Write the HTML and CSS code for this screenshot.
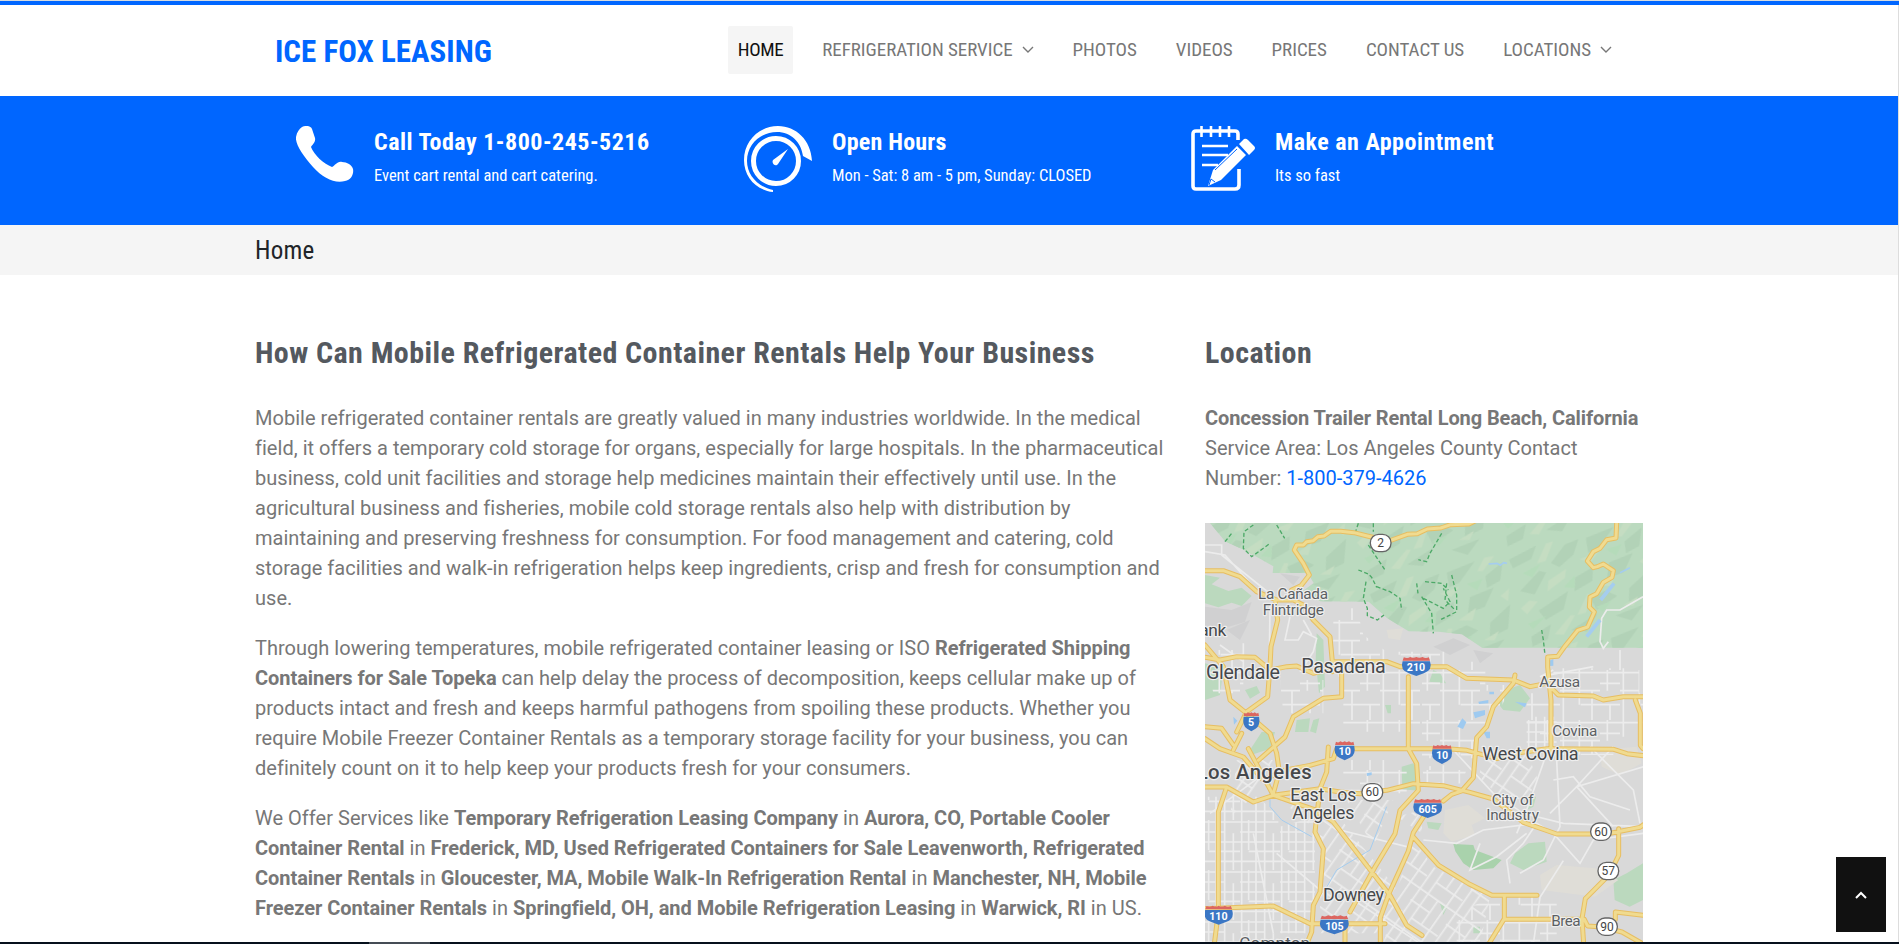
FILE: index.html
```html
<!DOCTYPE html>
<html lang="en">
<head>
<meta charset="utf-8">
<title>Ice Fox Leasing</title>
<link rel="stylesheet" href="styles.css">
</head>
<body>
<header class="header">
  <div class="header-inner">
    <a class="logo">ICE FOX LEASING</a>
    <nav class="nav">
      <a class="nav-link active">HOME</a>
      <a class="nav-link">REFRIGERATION SERVICE<svg class="caret" viewBox="0 0 12 8"><path d="M1 1l5 5 5-5"/></svg></a>
      <a class="nav-link">PHOTOS</a>
      <a class="nav-link">VIDEOS</a>
      <a class="nav-link">PRICES</a>
      <a class="nav-link">CONTACT US</a>
      <a class="nav-link">LOCATIONS<svg class="caret" viewBox="0 0 12 8"><path d="M1 1l5 5 5-5"/></svg></a>
    </nav>
  </div>
</header>
<section class="banner">
  <div class="feature feature-call">
    <svg class="feature-icon" width="58" height="66" viewBox="0 0 58 66"><path fill="#fff" d="M6 1C10-1 15 0 16 3l3 9c1 4-3 7-4 9 3 8 13 17 21 20 3-1 5-6 10-5 5 0 10 3 11 7 1 5-2 11-8 12-10 3-22-3-32-14C7 30-1 18 0 11 1 6 3 3 6 1z"/></svg>
    <div class="feature-text"><h3>Call Today 1-800-245-5216</h3><p>Event cart rental and cart catering.</p></div>
  </div>
  <div class="feature feature-hours">
    <svg class="feature-icon" width="68" height="67" viewBox="0 0 68 67"><g fill="none" stroke="#fff"><circle cx="32" cy="35" r="22.5" stroke-width="5"/></g><path fill="#fff" d="M29 66C12 64 0 51 0 34 0 15 15 0 34 0c18 0 33 14 34 35l-9-5C57 16 47 6 33 6 17 6 3 18 3 35c0 14 11 26 26 29zM44 23L34 38c-2 3-7 0-5-4z"/></svg>
    <div class="feature-text"><h3>Open Hours</h3><p>Mon - Sat: 8 am - 5 pm, Sunday: CLOSED</p></div>
  </div>
  <div class="feature feature-book">
    <svg class="feature-icon" width="64" height="66" viewBox="0 0 64 66"><g fill="none" stroke="#fff" stroke-width="3.6"><path d="M47 14V8q0-3-3-3H5Q2 5 2 8v52q0 3 3 3h39q4 0 4-4V43"/><path stroke-width="2.6" d="M10.500 0v11M20 0v11M29 0v11M38 0v11M11 20h26M11 29h26M11 39h16"/></g><path fill="#fff" d="M17 60l5-16L46 20l9 9-25 25zM48 18l5-5q2-1 4 1l6 6q2 2 0 4l-5 5z"/><path d="M24 44L46 23M18 59l2-6 4 3" stroke="#06f" fill="none"/></svg>
    <div class="feature-text"><h3>Make an Appointment</h3><p>Its so fast</p></div>
  </div>
</section>
<div class="crumbs"><span>Home</span></div>
<main class="main">
  <article class="article">
    <h2>How Can Mobile Refrigerated Container Rentals Help Your Business</h2>
    <p>Mobile refrigerated container rentals are greatly valued in many industries worldwide. In the medical<br>field, it offers a temporary cold storage for organs, especially for large hospitals. In the pharmaceutical<br>business, cold unit facilities and storage help medicines maintain their effectively until use. In the<br>agricultural business and fisheries, mobile cold storage rentals also help with distribution by<br>maintaining and preserving freshness for consumption. For food management and catering, cold<br>storage facilities and walk-in refrigeration helps keep ingredients, crisp and fresh for consumption and<br>use.</p>
    <p>Through lowering temperatures, mobile refrigerated container leasing or ISO <b>Refrigerated Shipping<br>Containers for Sale Topeka</b> can help delay the process of decomposition, keeps cellular make up of<br>products intact and fresh and keeps harmful pathogens from spoiling these products. Whether you<br>require Mobile Freezer Container Rentals as a temporary storage facility for your business, you can<br>definitely count on it to help keep your products fresh for your consumers.</p>
    <p>We Offer Services like <b>Temporary Refrigeration Leasing Company</b> in <b>Aurora, CO, Portable Cooler<br>Container Rental</b> in <b>Frederick, MD, Used Refrigerated Containers for Sale Leavenworth, Refrigerated<br>Container Rentals</b> in <b>Gloucester, MA, Mobile Walk-In Refrigeration Rental</b> in <b>Manchester, NH, Mobile<br>Freezer Container Rentals</b> in <b>Springfield, OH, and Mobile Refrigeration Leasing</b> in <b>Warwick, RI</b> in US.</p>
  </article>
  <aside class="aside">
    <h2>Location</h2>
    <p><b>Concession Trailer Rental Long Beach, California</b><br>Service Area: Los Angeles County Contact<br>Number: <a class="tel">1-800-379-4626</a></p>
    <svg class="map" width="438" height="421" viewBox="15 9 1314 1263">
      <defs>
        <pattern id="grid" width="180" height="150" patternUnits="userSpaceOnUse"><path class="street" d="M0 8H180M0 62H120M62 104H180M10 0V150M58 0V104M96 62V150M142 0V62M150 104V150M120 40H180"/></pattern>
        <pattern id="dense" width="120" height="150" patternUnits="userSpaceOnUse"><path class="street" d="M0 6H120M5 0V150M26 0V90M48 0V150M74 0V150M100 40V150M0 36H74M0 66H120M26 94H120M0 124H120"/></pattern>
        <pattern id="diag" width="130" height="130" patternUnits="userSpaceOnUse" patternTransform="rotate(35)"><path class="street" d="M0 6H130M5 0V130M34 0V130M70 6V94M100 0V130M0 50H70M34 94H130"/></pattern>
        <pattern id="relief" width="430" height="310" patternUnits="userSpaceOnUse" patternTransform="rotate(-14)">
          <g fill="#b2d2b7"><path d="M10 30l90-22-24 36-60 14zM130 70l54-44 44-6-26 42-50 26zM250 22l90-12-60 50-34 8zM360 60l60-28-20 52-44 12zM20 130l70-46 20 10-50 56zM190 130l60-18-12 40-60 18zM300 110l76-10-40 50-54 6zM60 200l100-36-26 50-60 18zM220 200l50-10 30 24-70 26zM340 200l72-40-24 70-60 14zM20 270l66-22-20 42-50 10zM140 280l90-30-44 46zM280 270l90-12-46 38z"/></g>
          <g fill="#c5ddc2"><path d="M90 60l40-50 22-2-36 52zM216 80l60-8-30 24zM340 40l30-34 30 2-44 36zM110 120l60-22-10 26-60 26zM250 170l60-24-20 34zM10 180l30-16 24 8-40 30zM170 240l44-54 12 4-30 50zM390 130l30-16-12 36zM90 280l60-44 12 4-46 48zM310 246l50-16-20 24z"/></g>
          <g fill="#b5dbba"><path d="M40 80l60-16-34 34zM150 150l40-26-8 36zM300 70l50-4-24 30zM230 230l50-6-34 26zM20 230l60-10-50 30z"/></g>
        </pattern>
        <path id="hills" d="M30 9l45 55 65 30 80 45-2 20h105l18 30-40 30 60 25 145 1 55 49 45 28 20 12 90 1 70 8 60 40h484V9z"/>
        <path id="ways" d="M275 210l28-13 25-32-18-35-27-40 7-15 20 0 10-10 20-3 14-12 18-2 20-14h30l40 4 40 10 65 15 55-20 30-2 30-14 40-3 30-10 55-2 40-20M1250 9l-2 45-28 5-20 26-20 10-18 28 18 20 12-3 18-8 30 20-4 20-26 15-20 34-20 10-2 30 15 15-20 45-30 10-40 50-20 28-30 2v30l10 100v164M15 152h55l50 18 50 45 60 25h50l30 15 30 45 50 50 7 75v30M225 240l8 60-20 80-3 60-7 90-63 45-30 61M15 412l45 8 50-10 55 2 45 38 50-10 30-2 50 22 60-15M400 425h160l40 15h140l60 35 140 5 50 20 50-10 35 35 105 3 30 12 60-10h59M15 375l55 65 20 100 50 40 70 60 20 60 8 55-18 65M945 465l-5 25-60 70-20 60-30 33-10 120-35 40-30 10-25 20M672 888l-32 50-15 55-27 60-32 70-25 70 0 79M425 430v100l-55 5-90 55-25 61-80 70M625 470v216l25 45 5 80-55 60-15 70-60 100-75 135M15 656l45 30 70 25 60 70 60-30 80-15 70-20 10-30h330l61 5 90 25 50-15 100-15 200 2 40 13 123 15M220 826l140-20 60 10 60 5 80-10 80-20 90 6 80 20 70 20 90 70 100 35h150l100-20 40-30 30-40M15 801h65l80 45 60-20-75-140M80 801l-25 75v300l-12 96M220 826l130 45 50 35 100 130 70 90 50 90 46 30M385 681l-5 75-20 50-15 130 25 50-10 130-20 40-5 80-15 36M15 1166l205-8 110 53h225M1256 926v80l-30 60-70 70-10 60 5 76M640 951l76 85 90 55 70 35h135M913 1126v70l-47 76M913 1198h240l10 20 43 3 60 15 63 36M1246 1198v-22l83 10M1306 540l15 40v96l8 10M435 1205v67M15 620l50 5 35 50M100 690l25-50"/>
        <g id="shield"><path fill="#3b77c5" d="M-33-14H33Q40 13 18 22L0 30-18 22Q-40 13-33-14z"/><path fill="#dc6660" d="M-30-26q9 5 15-1 8 5 15 0 7 5 15 0 7 6 15 1l3 10h-66z"/></g>
        <rect id="oval" x="-31" y="-26" width="62" height="52" rx="25" fill="#fff" stroke="#656565" stroke-width="4"/>
      </defs>
      <rect x="15" y="9" width="1314" height="1263" fill="#d9d9d9"/>
      <!-- parks and hills -->
      <use href="#hills" fill="#bbdabf"/>
      <use href="#hills" fill="url(#relief)"/>
      <path fill="#d0d0d1" d="M15 260l80 10 60-24-20 60-70 20-50-10zM80 330l70-30-30 60zM700 380l60-25 50 20-60 30zM820 390l60 10-40 30zM240 160l60 10-20 26z"/>
      <path fill="#bbd9be" d="M15 165l45 8-25 20 50 20 40-10 30 25-30 30-30-10-40 14-40-12zM15 430l55 15-10 80-45 15zM350 340l20 20 5 140-18 20-10-100zM135 510l35-12 10 20-30 18zM290 600l40-5-5 41h-40zM340 600l18-5-10 45-18-6zM150 690l35-54h40l-15 50-50 17zM555 555h18v25h-10zM605 740l35-10 15 20v62l-48-4zM920 510l40-15 30 40-30 40-50-5-20-25zM790 880l30 5-15 40-25-10zM680 905l45 5-10 20-30-5zM945 1000l40-30 50-5 5 60-70 25-40-20zM1240 1080l40-20 49-30v110l-40 20-45-20zM700 450l20 10 18 30-50-5zM990 835l18-5-8 30-20 10zM720 1150l20 15-10 20zM820 1220h20v20h-20z"/>
      <path fill="#a9d2ac" d="M760 972l60 3 5 15 80 30-25 25-60 5-30-20-24-36z"/>
      <path fill="#dfddd7" d="M735 870l70-15 50 40-40 20 10 30-70 20-25-25zM1020 1065l50-30 115 10 70 35-70 50-160-20zM1200 690l110-10 15 50-65 35-55-25zM560 330l50-5-10 35-35-5z"/>
      <!-- street grids -->
      <path fill="url(#grid)" d="M400 265h70l20 80 70 50h100v240H430V470h-30zM666 395h70v30h120v70h80l-30 60-70 80-10 80H666zM980 520h349v130H980zM1060 445h258v80h-258zM1040 635h200v70h-200zM15 390h115v130H40zM240 480h130v100H250zM430 720h190v100H430zM666 740l140-10-20 60-110 10zM880 1128h190v144H770v-90z"/>
      <path fill="url(#dense)" d="M15 830h160l60 60v382H15zM205 930l140-40v350H205zM980 590h90v100h-90z"/>
      <path fill="url(#diag)" d="M110 720h110l-60 110-70 60zM230 830l120 60 50-20 200 250-40 120H360V940zM840 700l140-5 40 100-90 60-90-80zM640 960l60 80 170 90-30 140H550l40-160zM590 890l76-20v70zM440 840h140l-60 140z"/>
      <path class="street" d="M15 75h50v30l150 120M15 95l60 10 80 90M210 250l-2 180M60 375l70 50M130 370v110M270 290l-15 70 40 0 15-25 40 20-10 40-40 60M310 300l25 45M1225 365l-15 20-10-20 5-70 15-25 40 0 69-40M1260 390v60M1060 450l-40 20 160-30M1060 780l60-10 50 60 120 40M1050 880l80-80 200-60M1040 700l-60 170-30 70M760 690l120 130 90 60 120 30 240 10M670 960l100 10 80-40 160-20 50 30 80 90 40-70 150-20 79-60M930 1090l-10-70 50-50 40-60M960 1060l70-40 50-100-10-200M1000 1272l20-140 70-110M840 970l-30 80 80-40 90-70M30 880l150-110M160 940l60 300M230 1000l130 110M420 930l200 50M460 1140l200 130M1170 680l130 130 20 100M1240 680l-110 120 110 120"/>
      <!-- water -->
      <g fill="none" stroke="#a5cdef" stroke-width="3"><path stroke-width="5" d="M866 132l25-2 10 6 10-8 10 2M1290 143l-30 15"/><path d="M210 740v120l35 40 90 50M560 860l-50 130-100 60-35 60"/><path stroke-width="11" d="M1242 190l-40 50M1200 300l-40 50"/></g>
      <path fill="#9ecaf0" d="M835 545l30-5v10l-28 2zM772 620l15-25 12 12-10 20zM820 577l35-7v15l-30 10zM850 635h20v20h-10zM1040 425l20-8v20l-20 2zM945 545l35 5-5 12zM868 515h14v8h-14zM100 590l12 12-10 12zM500 760l15-3v8l-14 3z"/>
      <!-- trails -->
      <path class="trail" d="M75 65l20-25M160 15l-28 20-2 50 25 25 35-25 20-15M230 15l24 40M475 10l-10 30M520 10l0 25M505 75l50 75M475 150l30 12 10 10 15 30M498 185l-8 50 12 30 0 22 30 13 20-15M530 200l40 15 30 20 5 35M725 40l-35 60-10 25-25-6M650 190l4 30M675 185l50 5 20 20M755 165l15 60 0 50-50 25M665 230l30 50 5 60M670 235l60 30 20-20-20-40M740 190l-5 50 30 30M1025 330l5 30 5 45"/>
      <!-- freeways -->
      <use href="#ways" class="way-edge"/>
      <use href="#ways" class="way"/>
      <!-- route markers -->
      <use href="#oval" x="542" y="69"/><use href="#oval" x="517" y="817"/><use href="#oval" x="1203" y="935"/><use href="#oval" x="1225" y="1053"/><use href="#oval" x="1221" y="1220"/>
      <use href="#shield" transform="translate(649 438) scale(1.25 1)"/><use href="#shield" transform="translate(154 604) scale(.7 1)"/><use href="#shield" transform="translate(434 691) scale(.87 1)"/><use href="#shield" transform="translate(726 702) scale(.87 1)"/><use href="#shield" transform="translate(683 864) scale(1.25 1)"/><use href="#shield" transform="translate(56 1184) scale(1.22 1)"/><use href="#shield" transform="translate(403 1213) scale(1.25 1)"/>
      <g class="route"><text x="542" y="81">2</text><text x="517" y="829">60</text><text x="1203" y="947">60</text><text x="1225" y="1065">57</text><text x="1221" y="1232">90</text></g>
      <g class="route inter"><text x="648" y="453">210</text><text x="153" y="618">5</text><text x="434" y="705">10</text><text x="726" y="716">10</text><text x="683" y="880">605</text><text x="55" y="1201">110</text><text x="403" y="1229">105</text></g>
      <!-- place names -->
      <g class="town">
        <text x="174" y="238" font-size="46" textLength="210">La Cañada</text>
        <text x="188" y="284" font-size="46" textLength="184">Flintridge</text>
        <text x="1018" y="502" font-size="46" textLength="122">Azusa</text>
        <text x="1057" y="647" font-size="46" textLength="135">Covina</text>
        <text x="875" y="855" font-size="46" textLength="126">City of</text>
        <text x="859" y="900" font-size="46" textLength="158">Industry</text>
        <text x="1054" y="1218" font-size="46" textLength="88">Brea</text>
        <text x="118" y="1286" font-size="51" textLength="212">Compton</text>
      </g>
      <g class="city">
        <text x="-2" y="349" font-size="52" textLength="81">ank</text>
        <text x="18" y="476" font-size="59" textLength="222">Glendale</text>
        <text x="304" y="460" font-size="59" textLength="253">Pasadena</text>
        <text x="271" y="843" font-size="53" textLength="198">East Los</text>
        <text x="277" y="897" font-size="53" textLength="186">Angeles</text>
        <text x="847" y="719" font-size="54" textLength="289">West Covina</text>
        <text x="369" y="1143" font-size="54" textLength="183">Downey</text>
        <text class="metro" x="-10" y="777" font-size="61" textLength="345">Los Angeles</text>
      </g>
    </svg>
  </aside>
</main>
<a class="to-top"><svg width="12" height="8" viewBox="0 0 12 8"><path d="M1 7l5-5 5 5"/></svg></a>
<div class="taskbar"><i></i></div>
<div class="scroll-edge"></div>
</body>
</html>
```

FILE: styles.css
```css
* { box-sizing: border-box; }
body { margin: 0; height: 944px; overflow: hidden; background: #fff; font: 20px/30px Roboto, "Open Sans", sans-serif; color: #777; }
h2, h3, p { margin: 0; }
b { font-weight: 700; letter-spacing: -.1px; }
.article b { letter-spacing: -.04px; }
.header, .banner, .crumbs, h2 { font-family: "Roboto Condensed", Roboto, sans-serif; white-space: nowrap; }
.header { height: 96px; border-top: 1px solid #d5dbe1; background: linear-gradient(#06f 4px, #fff 4px); }
.header-inner { display: flex; justify-content: space-between; padding: 25px 277px 0 275px; }
.logo { font-size: 31px; font-weight: 700; line-height: 52px; color: #06f; }
.nav { display: flex; gap: 19px; }
.nav-link { display: flex; align-items: center; height: 48px; padding: 0 10px; font-size: 19px; color: #777; letter-spacing: -.03px; }
.nav-link.active { background: #f5f5f5; color: #111; border-radius: 2px; letter-spacing: -.4px; }
.caret { width: 12px; height: 8px; margin-left: 9px; fill: none; stroke: #777; stroke-width: 1.4; }
.banner { display: flex; height: 129px; padding: 30px 0 0 296px; background: #06f; color: #fff; }
.feature { display: flex; width: 448px; }
.feature-hours { width: 447px; }
.feature-icon { margin-right: 20px; flex: none; }
.feature h3 { font-size: 24px; line-height: 32px; font-weight: 700; letter-spacing: .5px; }
.feature-hours h3 { letter-spacing: .2px; }
.feature p { margin-top: 3px; font-size: 16.5px; line-height: 30px; letter-spacing: -.03px; }
.crumbs { height: 50px; padding-left: 255px; background: #f5f5f5; color: #212529; font-size: 25px; line-height: 52px; letter-spacing: .2px; }
.main { display: flex; gap: 40px; padding: 58px 0 0 255px; }
.article { width: 910px; white-space: nowrap; letter-spacing: .025px; }
.aside { width: 438px; white-space: nowrap; }
h2 { font-size: 30px; line-height: 40px; font-weight: 700; letter-spacing: .44px; color: #54595f; margin-bottom: 30px; }
.article p { margin-bottom: 20px; }
.tel { color: #06f; }
.map { display: block; margin-top: 30px; overflow: hidden; font-family: Roboto, sans-serif; }
.street { fill: none; stroke: #ececec; stroke-width: 5; }
.trail { fill: none; stroke: #4ca967; stroke-width: 4; stroke-dasharray: 12 7; }
.way-edge { fill: none; stroke: #e7be62; stroke-width: 15; stroke-linejoin: round; stroke-linecap: round; }
.way { fill: none; stroke: #f0db90; stroke-width: 9; stroke-linejoin: round; stroke-linecap: round; }
.town text, .city text { stroke: #eee; stroke-width: 7; stroke-linejoin: round; paint-order: stroke; fill: #5c5f63; }
.city text { fill: #46484b; }
.city .metro { font-weight: 500; }
.route { font-size: 36px; text-anchor: middle; fill: #444; }
.inter { font-weight: 700; font-size: 32px; fill: #fff; }
.to-top { position: fixed; left: 1836px; top: 857px; width: 50px; height: 75px; display: flex; align-items: center; justify-content: center; background: #111; }
.to-top path { fill: none; stroke: #fff; stroke-width: 2; }
.taskbar { position: fixed; left: 0; right: 0; bottom: 0; height: 2px; padding-left: 369px; background: #06101c; }
.taskbar i { display: block; width: 61px; height: 2px; background: #454c55; }
.scroll-edge { position: fixed; right: 0; top: 5px; bottom: 2px; width: 1px; background: #ddd; }
```
